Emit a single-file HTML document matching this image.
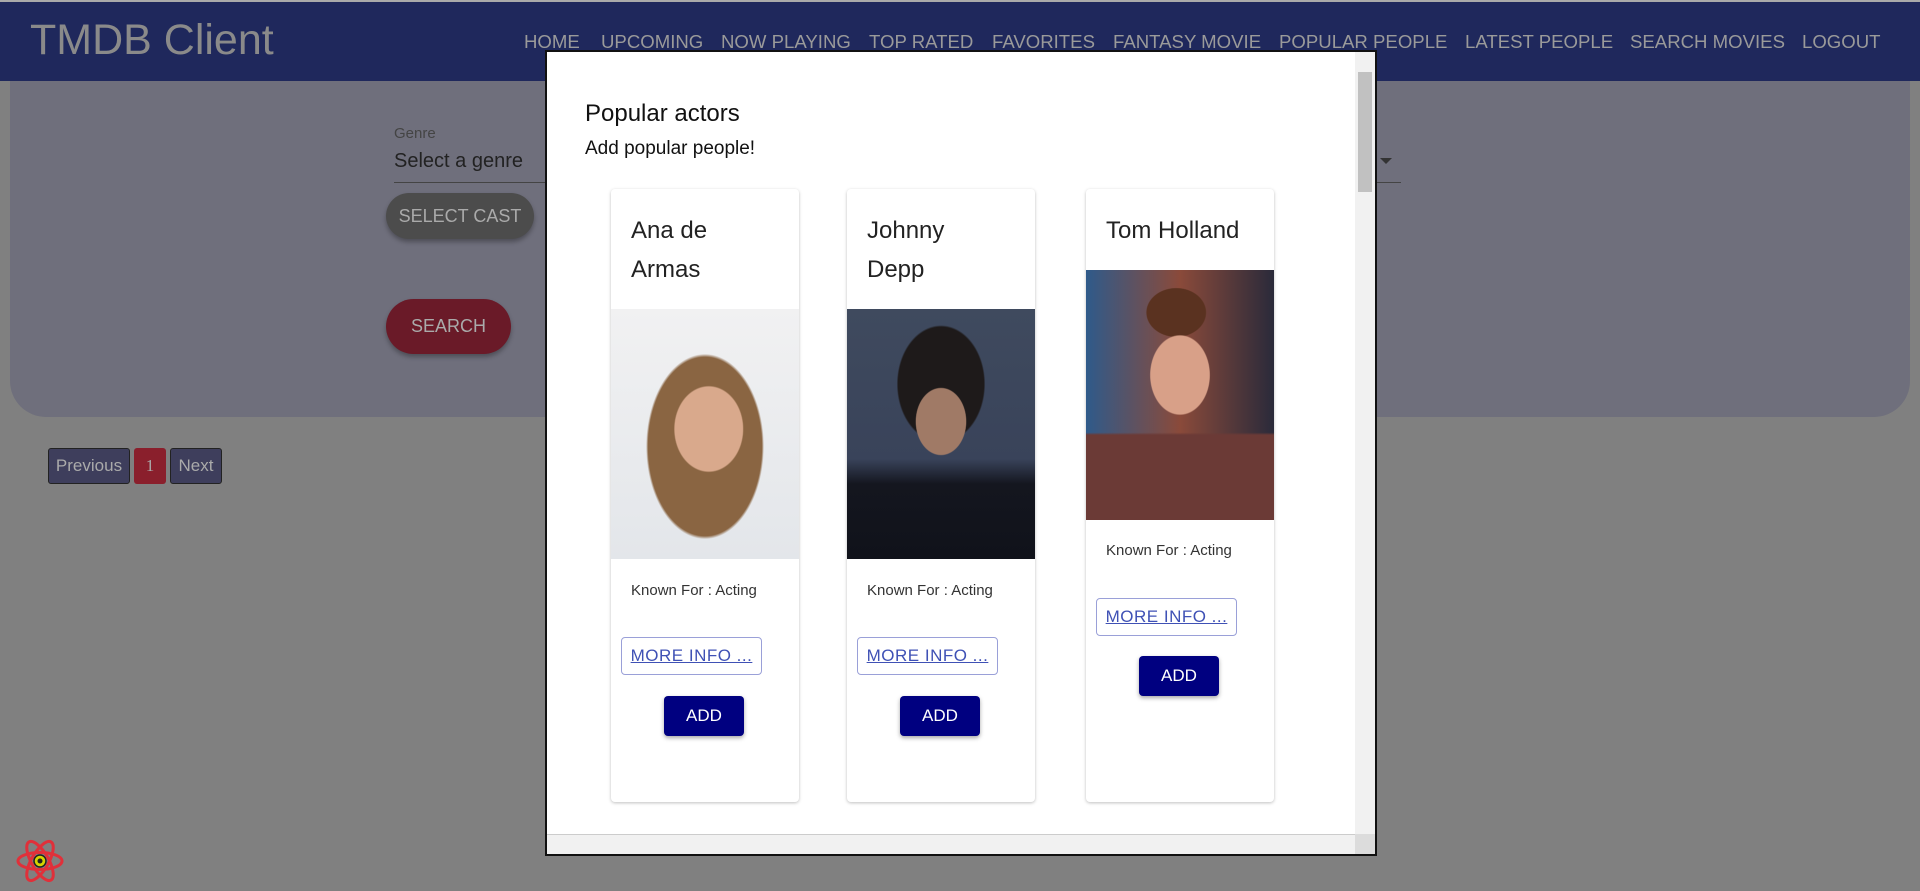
<!DOCTYPE html>
<html><head><meta charset="utf-8"><style>
*{box-sizing:border-box;margin:0;padding:0}
body{width:1920px;height:891px;overflow:hidden;background:#808080;font-family:"Liberation Sans",Arial,sans-serif;position:relative}
.nav{position:absolute;left:0;top:0;width:1920px;height:81px;background:#1f285c;border-top:2px solid #aaa}
.brand{position:absolute;left:30px;top:14px;font-size:43px;color:#8a8a8a}
.links{position:absolute;top:29px;font-size:18.6px;color:#9a9a9a;white-space:nowrap}
.links span{position:absolute}
.panel{position:absolute;left:10px;top:81px;width:1900px;height:336px;background:#6f6f7c;border-radius:0 0 36px 36px}
.abs{position:absolute}
.pill{position:absolute;border-radius:24px;color:#aaa;font-size:18px;display:flex;align-items:center;justify-content:center;box-shadow:0 3px 5px rgba(0,0,0,.3)}
.pg{position:absolute;top:448px;height:36px;font-size:17px;color:#aaa;display:flex;align-items:center;justify-content:center;border-radius:3px}
.modal{position:absolute;left:545px;top:50px;width:832px;height:806px;background:#fff;border:2px solid #111;overflow:hidden}
.card{position:absolute;top:137px;width:188px;height:613px;background:#fff;border-radius:4px;box-shadow:0 1px 3px rgba(0,0,0,.25)}
.name{position:absolute;left:20px;font-size:24px;line-height:39px;color:#222}
.img{position:absolute;left:0;width:188px;height:250px}
.kf{position:absolute;left:20px;font-size:15px;color:#333}
.mi{position:absolute;left:10px;width:141px;height:38px;border:1px solid #9aa0d8;border-radius:4px;color:#3f51b5;text-decoration:underline;font-size:17px;display:flex;align-items:center;justify-content:center;letter-spacing:.5px}
.add{position:absolute;left:53px;width:80px;height:40px;background:#000080;color:#fff;font-size:17px;border-radius:4px;display:flex;align-items:center;justify-content:center;box-shadow:0 2px 4px rgba(0,0,0,.35)}
</style></head><body>
<div class="nav"><div class="brand">TMDB Client</div>
<div class="links">
<span style="left:524px">HOME</span><span style="left:601px">UPCOMING</span><span style="left:721px">NOW PLAYING</span><span style="left:869px">TOP RATED</span><span style="left:992px">FAVORITES</span><span style="left:1113px">FANTASY MOVIE</span><span style="left:1279px">POPULAR PEOPLE</span><span style="left:1465px">LATEST PEOPLE</span><span style="left:1630px">SEARCH MOVIES</span><span style="left:1802px">LOGOUT</span>
</div></div>
<div class="panel"></div>
<div class="abs" style="left:394px;top:125px;font-size:15px;color:#444">Genre</div>
<div class="abs" style="left:394px;top:150px;font-size:20px;color:#222">Select a genre</div>
<div class="abs" style="left:394px;top:182px;width:1007px;height:1px;background:#444"></div>
<div class="abs" style="left:1380px;top:158px;border-left:6px solid transparent;border-right:6px solid transparent;border-top:6px solid #333"></div>
<div class="pill" style="left:386px;top:193px;width:148px;height:46px;background:#4c4c4c">SELECT CAST</div>
<div class="pill" style="left:386px;top:299px;width:125px;height:55px;background:#6a1a28;border-radius:28px">SEARCH</div>
<div class="pg" style="left:48px;width:82px;background:#3e3e5c;border:1px solid #222">Previous</div>
<div class="pg" style="left:134px;width:32px;background:#8a1f2c;font-family:'Liberation Serif',serif">1</div>
<div class="pg" style="left:170px;width:52px;background:#3e3e5c;border:1px solid #222">Next</div>
<svg class="abs" style="left:15px;top:838px" width="50" height="46" viewBox="-25 -23 50 46"><g fill="none" stroke="#e0303a" stroke-width="3"><ellipse rx="22" ry="8.5"/><ellipse rx="22" ry="8.5" transform="rotate(60)"/><ellipse rx="22" ry="8.5" transform="rotate(120)"/></g><circle r="6" fill="#d4d400" stroke="#222" stroke-width="1.5"/><circle r="2.5" fill="#222"/></svg>
<div class="modal">
<div class="abs" style="left:38px;top:48px;font-size:24px;color:#111">Popular actors</div>
<div class="abs" style="left:38px;top:86px;font-size:19px;color:#111">Add popular people!</div>
<div class="card" style="left:64px">
<div class="name" style="top:22px">Ana de<br>Armas</div>
<div class="img" style="top:120px;background:radial-gradient(ellipse 30% 28% at 52% 48%,#d9a98c 60%,transparent 62%),radial-gradient(ellipse 55% 65% at 50% 55%,#8a6542 55%,transparent 57%),linear-gradient(#f1f1f2,#e3e6ea)"></div>
<div class="kf" style="top:393px">Known For : Acting</div>
<div class="mi" style="top:448px">MORE INFO ...</div>
<div class="add" style="top:507px">ADD</div>
</div>
<div class="card" style="left:300px">
<div class="name" style="top:22px">Johnny<br>Depp</div>
<div class="img" style="top:120px;background:radial-gradient(ellipse 22% 22% at 50% 45%,#a07a66 60%,transparent 62%),radial-gradient(ellipse 38% 38% at 50% 30%,#1e1a1a 60%,transparent 62%),linear-gradient(#3f4a5e 0%,#39435a 60%,#14161f 70%,#10121a)"></div>
<div class="kf" style="top:393px">Known For : Acting</div>
<div class="mi" style="top:448px">MORE INFO ...</div>
<div class="add" style="top:507px">ADD</div>
</div>
<div class="card" style="left:539px">
<div class="name" style="top:22px">Tom Holland</div>
<div class="img" style="top:81px;background:radial-gradient(ellipse 26% 26% at 50% 42%,#d8a088 60%,transparent 62%),radial-gradient(ellipse 26% 16% at 48% 17%,#5a3220 60%,transparent 62%),linear-gradient(to bottom,transparent 65%,#6b3a36 66%),linear-gradient(90deg,#2f5a8a,#8a4a3a 50%,#2a2a3a)"></div>
<div class="kf" style="top:353px">Known For : Acting</div>
<div class="mi" style="top:409px">MORE INFO ...</div>
<div class="add" style="top:467px">ADD</div>
</div>
<div class="abs" style="right:0;top:0;width:20px;height:783px;background:#f1f1f1"><div class="abs" style="left:3px;top:20px;width:14px;height:120px;background:#c1c1c1"></div></div>
<div class="abs" style="left:0;bottom:0;width:808px;height:20px;background:#f1f1f1;border-top:1px solid #ccc"></div>
<div class="abs" style="right:0;bottom:0;width:20px;height:20px;background:#dcdcdc"></div>
</div>
</body></html>
